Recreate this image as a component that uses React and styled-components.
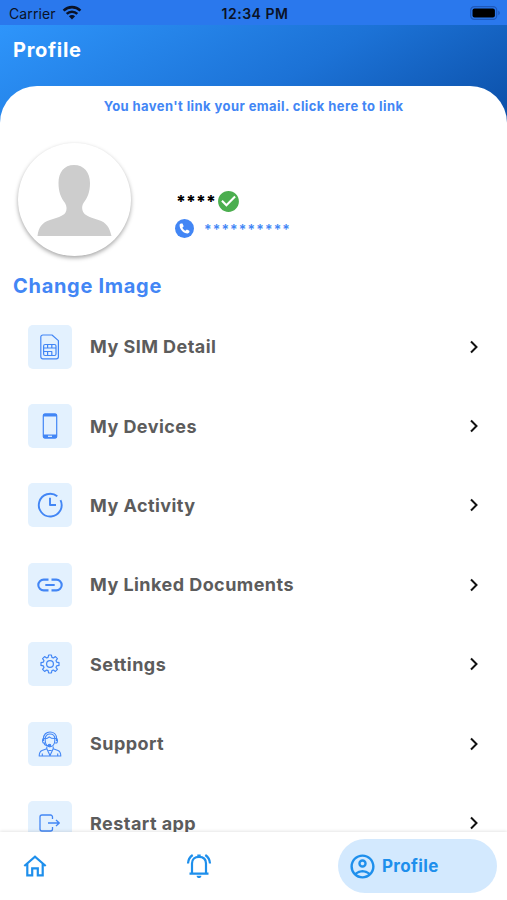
import * as React from "react"
import styled, { createGlobalStyle } from "styled-components"
import { MdCheckCircle, MdOutlineAccountCircle } from "react-icons/md"

const BLUE = "#4286f5"

const SimIcon = () => (
  <Glyph width="20" height="26" viewBox="0 0 20 26">
    <path d="M2.800 1H12l6.400 5.600v16.200a2 2 0 0 1-2 2H2.800a2 2 0 0 1-2-2V3a2 2 0 0 1 2-2z" />
    <rect x="3.600" y="10.500" width="12.400" height="11" rx="1.500" />
    <path d="M3.600 14h12.400M7.600 10.500V14M11.800 10.500V14M3.600 17.500h8.200v4M7.600 17.500v4" />
  </Glyph>
)

const PhoneIcon = () => (
  <Glyph width="16" height="26" viewBox="0 0 16 26">
    <rect x="1.300" y="1" width="13.400" height="24" rx="1.500" />
    <path d="M1 2.500a2 2 0 0 1 2-2h10a2 2 0 0 1 2 2V3.500H1zM1 21.500h14v2a2 2 0 0 1-2 2H3a2 2 0 0 1-2-2z" fill={BLUE} stroke="none" />
    <path d="M6 23.300h4" stroke="#e3f1fe" strokeWidth="1.200" />
  </Glyph>
)

const ClockIcon = () => (
  <Glyph width="26" height="26" viewBox="0 0 26 26" $weight={1.9}>
    <path d="M20.300 4.200A11.400 11.400 0 1 0 23.500 8.200" />
    <path d="M13 5.800V13h6" />
  </Glyph>
)

const LinkIcon = () => (
  <Glyph width="26" height="14" viewBox="0 0 26 14" $weight={2.1}>
    <path d="M11.500 1.600H6.700a5.400 5.400 0 0 0 0 10.800h4.800M14.500 1.600h4.800a5.400 5.400 0 0 1 0 10.800h-4.800M8.300 7h9.400" />
  </Glyph>
)

const GearIcon = () => (
  <Glyph width="20" height="20" viewBox="0 0 20 20" $weight={1.2}>
    <path d="M8.6 1h2.800l.5 2.400 1.500.6 2-1.400 2 2L16 6.600l.6 1.500 2.400.5v2.800l-2.400.5-.6 1.500 1.400 2-2 2-2-1.400-1.500.6-.5 2.400H8.600l-.5-2.400-1.500-.6-2 1.400-2-2 1.400-2-.6-1.500L1 11.400V8.600l2.400-.5L4 6.600l-1.400-2 2-2 2 1.400 1.500-.6z" />
    <circle cx="10" cy="10" r="3.400" />
  </Glyph>
)

const SupportIcon = () => (
  <Glyph width="24" height="26" viewBox="0 0 24 26" $weight={1.1}>
    <path d="M5.500 10V7.500C5.500 3.500 8.300 1 12 1s6.500 2.500 6.500 6.500V10" />
    <path d="M7.200 8C7.200 4.700 9 3 12 3s4.800 1.700 4.800 5v1.500c0 3.500-2 6.300-4.800 6.300S7.200 13 7.200 9.500z" />
    <path d="M7.200 7.800c2-.2 3-.9 4-2 1.600 1.400 3.400 1.800 5.600 1.700M7 7.500H5.300c-1 1-1 3.500 0 4.500H7M17 7.500h1.700c1 1 1 3.500 0 4.500H17M6.200 12c0 2 1.500 2.700 4.500 2.700" />
    <circle cx="11.500" cy="14.500" r="1.300" fill={BLUE} />
    <path d="M8.800 15.500v2.300L4 19.400C2 20.200 1.200 22 1.200 25h21.600c0-3-.8-4.800-2.800-5.600l-4.800-1.600v-2.300M8.800 17.800 12 24.500l3.200-6.700M10.500 19.500h3M4.300 22.500V25M19.700 22.500V25" />
  </Glyph>
)

const ExitIcon = () => (
  <Glyph width="22" height="18" viewBox="0 0 22 18" $weight={1.3}>
    <path d="M13.500 5V3a2 2 0 0 0-2-2H3a2 2 0 0 0-2 2v12a2 2 0 0 0 2 2h8.500a2 2 0 0 0 2-2v-2M9 9h11M17 6l3.300 3L17 12" />
  </Glyph>
)

const HomeIcon = () => (
  <svg width="24" height="22" viewBox="0 0 24 22">
    <path
      d="M1.300 11 12 1.700 22.700 11M4.300 9v11.300h4.900v-7h5.600v7h4.900V9"
      fill="none"
      stroke="currentColor"
      strokeWidth="2.200"
    />
  </svg>
)

const BellIcon = () => (
  <svg width="26" height="26" viewBox="0 0 26 26">
    <g fill="none" stroke="currentColor" strokeWidth="2.200">
      <path d="M3.500 20.600h19M6 20.500V10.500C6 6.300 8.700 3.800 13 3.800s7 2.500 7 6.700v10" />
      <path d="M2 10.500C2.200 6.800 3.800 3.900 6.700 2M24 10.500c-.2-3.700-1.800-6.600-4.700-8.500" />
    </g>
    <path d="M11.300 1.500h3.400V4h-3.400zM10.600 22.700h4.800c0 3.200-4.800 3.200-4.800 0z" fill="currentColor" />
  </svg>
)

const WifiIcon = () => (
  <svg width="20" height="15" viewBox="0 0 20 15">
    <g fill="none" stroke="#0a1226" strokeWidth="2.600">
      <path d="M1.600 5.600a12 12 0 0 1 16.800 0M4.700 8.900a7.500 7.500 0 0 1 10.600 0" />
    </g>
    <path d="M10 14.400 6.900 11.300a4.400 4.400 0 0 1 6.200 0z" fill="#0a1226" />
  </svg>
)

const BatteryIcon = () => (
  <svg width="31" height="14" viewBox="0 0 31 14">
    <rect x=".7" y=".7" width="26" height="12.600" rx="3.600" fill="none" stroke="#1f59bb" strokeWidth="1.200" />
    <rect x="2.500" y="2.500" width="22.400" height="9" rx="2" fill="#000" />
    <path d="M28.300 4.800v4.400c2-.7 2-3.700 0-4.400z" fill="#1f59bb" />
  </svg>
)

const MENU = [
  { label: "My SIM Detail", Icon: SimIcon },
  { label: "My Devices", Icon: PhoneIcon },
  { label: "My Activity", Icon: ClockIcon },
  { label: "My Linked Documents", Icon: LinkIcon },
  { label: "Settings", Icon: GearIcon },
  { label: "Support", Icon: SupportIcon },
  { label: "Restart app", Icon: ExitIcon },
]

const App = () => {
  return (
    <Screen>
      <GlobalStyle />
      <StatusBar>
        <Carrier>
          Carrier
          <WifiIcon />
        </Carrier>
        <Time>12:34 PM</Time>
        <Battery>
          <BatteryIcon />
        </Battery>
      </StatusBar>
      <Header>
        <Title>Profile</Title>
        <Sheet>
          <EmailLink>You haven't link your email. click here to link</EmailLink>
          <UserArea>
            <Avatar>
              <svg width="76" height="72" viewBox="0 0 76 72">
                <path
                  d="M37 0C47 0 53 7.500 53 18c0 9-2.500 15-6.500 20-2 3-1.500 7 0 9.500 2.500 4 9 5.500 15 7.500 8 2.500 11 7.500 13 16H.5c1-8.500 4.500-13.500 12.500-16 6-2 13-3.500 15.500-7.500 1.500-2.500 1.500-6.500-.5-9.500-4-5-6.500-11-6.500-20C21.500 7.500 27 0 37 0z"
                  fill="#cdcdcd"
                />
              </svg>
            </Avatar>
            <UserInfo>
              <UserName>
                <span>****</span>
                <MdCheckCircle size={25} color="#4bae4f" />
              </UserName>
              <UserPhone>
                <svg width="19" height="19" viewBox="0 0 19 19">
                  <circle cx="9.500" cy="9.500" r="9.500" fill={BLUE} />
                  <path
                    d="M6 4.500 7.500 4.400l1.200 2.900-1.300 1.400c.7 1.300 1.600 2.300 3 3l1.500-1.200 2.500 1.300c.3 1.200-.2 2.500-1.700 2.600C8.500 14.500 4.500 10.500 4.600 6c0-.8.600-1.400 1.400-1.500z"
                    fill="#fff"
                  />
                </svg>
                <span>**********</span>
              </UserPhone>
            </UserInfo>
          </UserArea>
          <ChangeImage>Change Image</ChangeImage>
          <Menu>
            {MENU.map(({ label, Icon }) => (
              <MenuRow key={label}>
                <Tile>
                  <Icon />
                </Tile>
                <Label>{label}</Label>
                <svg width="10" height="14" viewBox="0 0 10 14">
                  <path d="M2 1.500 7.500 7 2 12.500" fill="none" stroke="#111" strokeWidth="2" />
                </svg>
              </MenuRow>
            ))}
          </Menu>
        </Sheet>
      </Header>
      <NavBar>
        <NavItem>
          <HomeIcon />
        </NavItem>
        <NavItem>
          <BellIcon />
        </NavItem>
        <ActiveItem>
          <MdOutlineAccountCircle size={29} />
          Profile
        </ActiveItem>
      </NavBar>
    </Screen>
  )
}

const GlobalStyle = createGlobalStyle`
  * {
    box-sizing: border-box;
  }
  body {
    margin: 0;
    font-family: Inter, "Liberation Sans", sans-serif;
  }
  svg {
    display: block;
    flex-shrink: 0;
  }
`

//Layout
const Screen = styled.div`
  display: flex;
  flex-direction: column;
  width: 507px;
  height: 900px;
  overflow: hidden;
  background: #fff;
`

const StatusBar = styled.div`
  display: grid;
  grid-template-columns: 1fr auto 1fr;
  align-items: center;
  flex: none;
  height: 25px;
  padding: 2px 6px 0 9px;
  background: #2a78ed;
  color: #0a1226;
  font-size: 14px;
`

const Carrier = styled.div`
  display: flex;
  align-items: center;
  gap: 6px;
  letter-spacing: 0.1px;

  svg {
    margin-top: -2px;
  }
`

const Time = styled.div`
  font-weight: 600;
  letter-spacing: 0.5px;
`

const Battery = styled.div`
  display: flex;
  justify-content: flex-end;

  svg {
    margin-top: -2px;
  }
`

const Header = styled.div`
  display: flex;
  flex-direction: column;
  flex: 1;
  min-height: 0;
  background: linear-gradient(150deg, #2e95fb 0, #1c72d6 190px, #0b4ea6 340px);
`

const Title = styled.h1`
  flex: none;
  height: 61px;
  margin: 0;
  padding: 11px 13px 0;
  color: #fff;
  font-size: 20px;
  font-weight: 700;
  line-height: 28px;
  letter-spacing: 0.7px;
`

const Sheet = styled.div`
  display: flex;
  flex-direction: column;
  flex: 1;
  min-height: 0;
  overflow: hidden;
  border-radius: 37px 37px 0 0;
  background: #fff;
`

const EmailLink = styled.div`
  flex: none;
  padding-top: 10px;
  color: ${BLUE};
  font-size: 13px;
  font-weight: 700;
  line-height: 20px;
  letter-spacing: 0.42px;
  text-align: center;
`

const UserArea = styled.div`
  display: flex;
  flex: none;
  gap: 45px;
  padding: 27px 18px 0;
`

const Avatar = styled.div`
  display: flex;
  justify-content: center;
  width: 113px;
  height: 113px;
  padding-top: 22px;
  border-radius: 50%;
  background: #fff;
  box-shadow: 0 2px 4px rgba(0, 0, 0, 0.35);
`

const UserInfo = styled.div`
  display: flex;
  flex-direction: column;
  gap: 5px;
  padding-top: 46px;
`

const UserName = styled.div`
  display: flex;
  align-items: center;
  height: 25px;
  color: #000;
  font-size: 17px;
  font-weight: 800;
  letter-spacing: 0.1px;

  span {
    padding-top: 1px;
  }
`

const UserPhone = styled.div`
  display: flex;
  align-items: center;
  gap: 10px;
  height: 19px;
  margin-left: -1px;
  color: ${BLUE};
  font-size: 14px;
  font-weight: 600;
  letter-spacing: 1.15px;

  span {
    padding-top: 2px;
  }
`

const ChangeImage = styled.div`
  flex: none;
  padding: 16px 13px 0;
  color: ${BLUE};
  font-size: 20px;
  font-weight: 700;
  line-height: 28px;
  letter-spacing: 0.7px;
`

const Menu = styled.div`
  display: flex;
  flex-direction: column;
  flex: none;
  padding: 7px 28px 0;
`

const MenuRow = styled.div`
  display: flex;
  align-items: center;
  height: 79.4px;
`

const Tile = styled.div`
  display: flex;
  align-items: center;
  justify-content: center;
  width: 44px;
  height: 44px;
  border-radius: 5px;
  background: #e3f1fe;
`

const Glyph = styled.svg`
  fill: none;
  stroke: ${BLUE};
  stroke-width: ${(props) => props.$weight || 1.2};
  stroke-linejoin: round;
`

const Label = styled.div`
  flex: 1;
  padding-left: 18px;
  color: #5c5c5c;
  font-size: 18px;
  font-weight: 700;
  letter-spacing: 0.45px;
`

const NavBar = styled.nav`
  display: flex;
  align-items: center;
  flex: none;
  position: relative;
  height: 68px;
  padding: 0 10px 0 0;
  background: #fff;
  box-shadow: 0 -1px 3px rgba(0, 0, 0, 0.1);
  color: #1e8fec;
`

const NavItem = styled.div`
  display: flex;
  align-items: center;
  width: 164px;
  padding-left: 23px;

  & + & {
    width: 174px;
    padding-left: 22px;
  }
`

const ActiveItem = styled.div`
  display: flex;
  align-items: center;
  gap: 5px;
  flex: 1;
  height: 54px;
  padding-left: 10px;
  border-radius: 27px;
  background: #d3e9fe;
  font-size: 17px;
  font-weight: 700;
  letter-spacing: 0.35px;
`

export default App
